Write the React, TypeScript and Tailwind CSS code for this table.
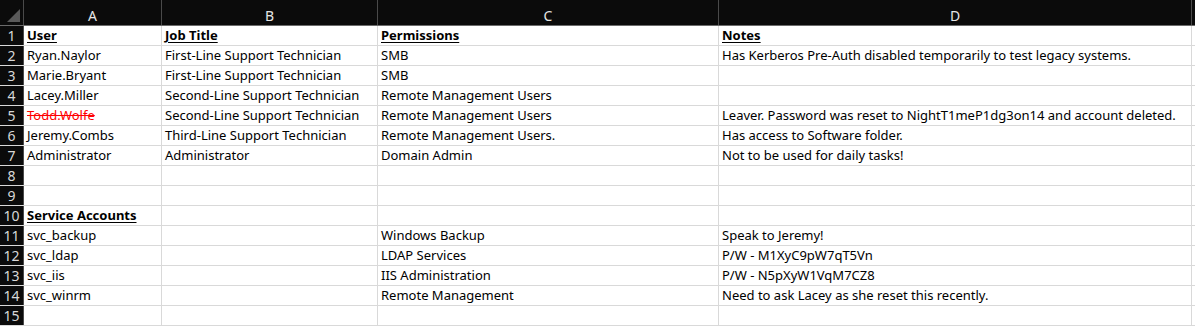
const rows: (string | { t: string; red?: boolean; bold?: boolean })[][] = [
  [{ t: "User", bold: true }, { t: "Job Title", bold: true }, { t: "Permissions", bold: true }, { t: "Notes", bold: true }],
  ["Ryan.Naylor", "First-Line Support Technician", "SMB", "Has Kerberos Pre-Auth disabled temporarily to test legacy systems."],
  ["Marie.Bryant", "First-Line Support Technician", "SMB", ""],
  ["Lacey.Miller", "Second-Line Support Technician", "Remote Management Users", ""],
  [{ t: "Todd.Wolfe", red: true }, "Second-Line Support Technician", "Remote Management Users", "Leaver. Password was reset to NightT1meP1dg3on14 and account deleted."],
  ["Jeremy.Combs", "Third-Line Support Technician", "Remote Management Users.", "Has access to Software folder."],
  ["Administrator", "Administrator", "Domain Admin", "Not to be used for daily tasks!"],
  ["", "", "", ""],
  ["", "", "", ""],
  [{ t: "Service Accounts", bold: true }, "", "", ""],
  ["svc_backup", "", "Windows Backup", "Speak to Jeremy!"],
  ["svc_ldap", "", "LDAP Services", "P/W - M1XyC9pW7qT5Vn"],
  ["svc_iis", "", "IIS Administration", "P/W - N5pXyW1VqM7CZ8"],
  ["svc_winrm", "", "Remote Management", "Need to ask Lacey as she reset this recently."],
  ["", "", "", ""],
];

const cols = ["A", "B", "C", "D"];
const widths = ["w-[138px]", "w-[216px]", "w-[341px]", "w-[473px]"];

export default function App() {
  return (
    <div className="w-[1195px] h-[328px] bg-white overflow-hidden text-[13px] text-black" style={{ fontFamily: '"Noto Sans", sans-serif' }}>
      <div className="flex h-[26px] bg-[#0b0b0b] border-b border-[#6b6b6b]">
        <div className="w-[24px] shrink-0 border-r border-[#4a4a4a] relative">
          <div className="absolute right-[3px] bottom-[3px] w-0 h-0 border-l-[13px] border-l-transparent border-b-[13px] border-b-[#5a5a5a]" />
        </div>
        {cols.map((c, i) => (
          <div key={c} className={`${widths[i]} shrink-0 border-r border-[#4a4a4a] flex items-center justify-center pt-[5px] text-[#e6e6e6] text-[14px]`}>
            {c}
          </div>
        ))}
        <div className="flex-1" />
      </div>
      {rows.map((r, ri) => (
        <div key={ri} className="flex h-[20px] border-b border-[#d9d9d9]">
          <div className="w-[24px] shrink-0 bg-[#0b0b0b] border-r border-[#4a4a4a] flex items-center justify-center text-[#d8d8d8] text-[14px]">
            {ri + 1}
          </div>
          {r.map((cell, ci) => {
            const c = typeof cell === "string" ? { t: cell } : cell;
            return (
              <div key={ci} className={`${widths[ci]} shrink-0 border-r border-[#d9d9d9] flex items-center pl-[3px] whitespace-nowrap leading-none`}>
                <span className={`${c.bold ? "font-bold underline underline-offset-2" : ""} ${c.red ? "text-[#ff0000] line-through" : ""}`}>{c.t}</span>
              </div>
            );
          })}
          <div className="flex-1" />
        </div>
      ))}
    </div>
  );
}
